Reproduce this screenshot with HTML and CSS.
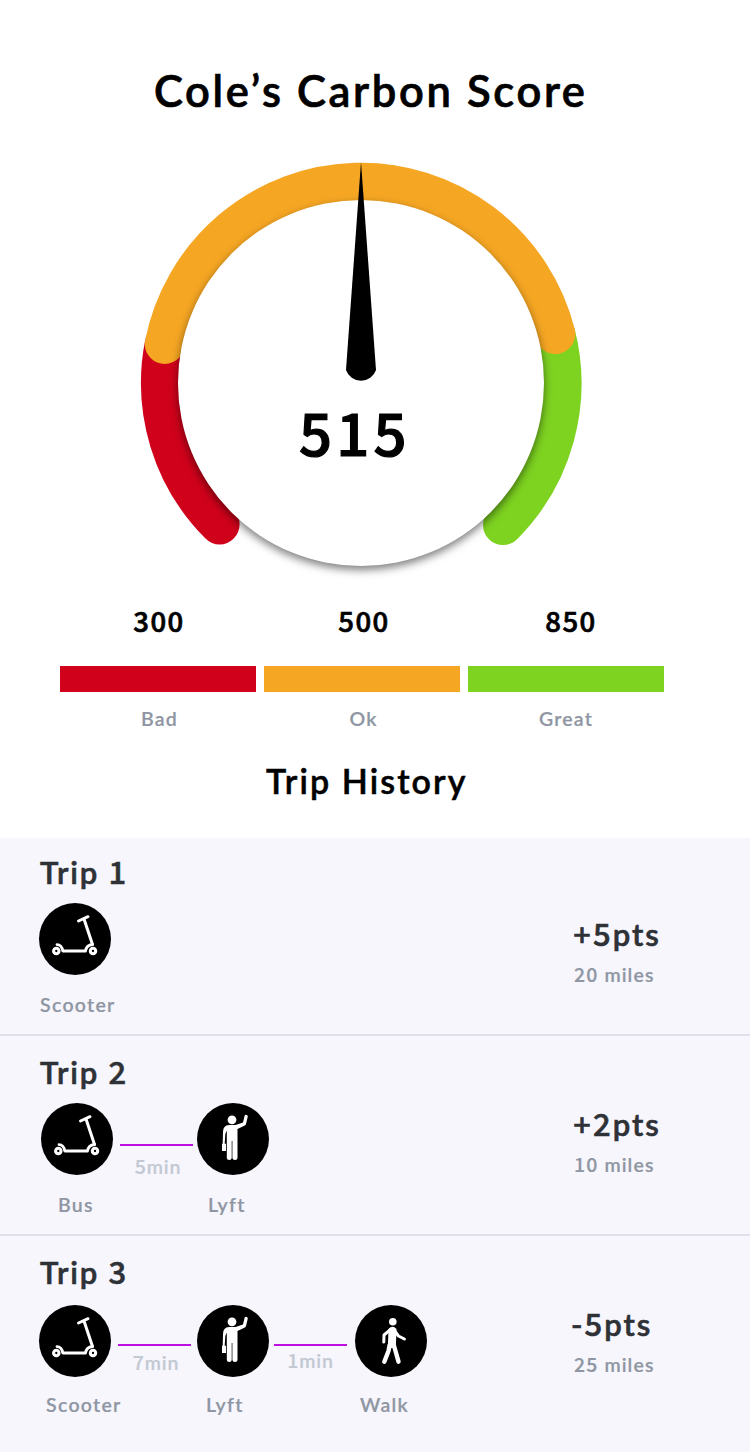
FILE: index.html
```html
<!DOCTYPE html>
<html>
    <head>
        <meta charset="utf-8">
        <title>Carbon Score</title>
        <link rel="stylesheet" href="styles.css">
    </head>
    <body>
        <!-- icons used by the trips -->
        <svg class="icon-defs">
            <symbol id="scooter" viewBox="0 0 72 72">
                <g fill="none" stroke="white" stroke-linecap="round" stroke-linejoin="round">
                    <path d="M39.5 18 L49 13.7" stroke-width="3"/>
                    <path d="M45 16 L53.5 41.5" stroke-width="3"/>
                    <path d="M18 41.6 C22 41.6 23.2 44.5 23.8 48 H46.5 C47 44.5 49 42 53.5 41.5" stroke-width="2.8"/>
                    <circle cx="17.3" cy="48" r="2.7" stroke-width="3.1"/>
                    <circle cx="54" cy="48" r="2.7" stroke-width="3.1"/>
                </g>
            </symbol>
            <symbol id="lyft" viewBox="0 0 72 72">
                <circle cx="35" cy="16.8" r="4.4" fill="white"/>
                <path d="M32 22 H38.5 L46 19.5 L47.6 12.8 Q48.3 11.2 50.2 12.2 Q51 12.8 50.7 14 L49 21 Q48.7 22 47.8 22.5 L40.5 26 V55 Q40.4 57 38 57 Q35.5 57 35.4 55 V38 H34.7 V55 Q34.6 57 32.3 57 Q29.9 57 29.8 55 V27.5 L28.3 31 L27.7 40.7 H29 V48 H25 V40.7 H25.7 L26 29 Q26 22.3 32 22 Z" fill="white"/>
            </symbol>
            <symbol id="walk" viewBox="0 0 72 72">
                <circle cx="37.8" cy="16.8" r="3.8" fill="white"/>
                <g fill="none" stroke="white" stroke-linecap="round" stroke-linejoin="round">
                    <path d="M35 25 L29 30 L28.8 37" stroke-width="3"/>
                    <path d="M39 25 L43.5 31 L49.4 34" stroke-width="3"/>
                    <path d="M34.7 40 L33.5 46 L29.3 56.7" stroke-width="4.4"/>
                    <path d="M38.8 40 L40.5 46 L43.5 56.7" stroke-width="4.4"/>
                </g>
                <path d="M33.5 24 Q37.5 19.5 41.5 24 L40.8 43 H32.8 Z" fill="white"/>
            </symbol>
        </svg>

        <h1 class="title">Cole’s Carbon Score</h1>

        <div class="gauge">
            <svg class="gauge-arc" width="442" height="442" viewBox="140 162 442 442">
                <path class="arc red" d="M219.6 524.4 A200 200 0 0 1 164.8 344"/>
                <path class="arc green" d="M503 525 A200.3 200.3 0 0 0 555.3 334"/>
                <path class="arc orange" d="M164.8 344 A200.2 200.2 0 0 1 555.3 334"/>
            </svg>
            <div class="dial"></div>
            <svg class="needle" width="32" height="220" viewBox="0 0 32 220">
                <path d="M16 0 L31 208 A15.8 15.8 0 0 1 1 208 Z"/>
            </svg>
            <p class="score">515</p>
        </div>

        <div class="scale">
            <div class="range bad">
                <p class="range-value">300</p>
                <div class="range-bar"></div>
                <p class="range-name">Bad</p>
            </div>
            <div class="range ok">
                <p class="range-value">500</p>
                <div class="range-bar"></div>
                <p class="range-name">Ok</p>
            </div>
            <div class="range great">
                <p class="range-value">850</p>
                <div class="range-bar"></div>
                <p class="range-name">Great</p>
            </div>
        </div>

        <h2 class="subtitle">Trip History</h2>

        <div class="trips">
            <div class="trip trip-one">
                <div class="trip-route">
                    <h3 class="trip-name">Trip <span class="num">1</span></h3>
                    <div class="stops">
                        <svg class="stop"><use href="#scooter"/></svg>
                    </div>
                    <div class="labels"><span class="label-first">Scooter</span></div>
                </div>
                <div class="trip-result">
                    <p class="points">+<span class="num">5</span>pts</p>
                    <p class="miles"><span class="num">20</span> miles</p>
                </div>
            </div>

            <div class="trip trip-two">
                <div class="trip-route">
                    <h3 class="trip-name">Trip <span class="num">2</span></h3>
                    <div class="stops">
                        <svg class="stop"><use href="#scooter"/></svg>
                        <div class="link"><span class="num">5</span>min</div>
                        <svg class="stop"><use href="#lyft"/></svg>
                    </div>
                    <div class="labels">
                        <span class="label-first">Bus</span>
                        <span class="label-second">Lyft</span>
                    </div>
                </div>
                <div class="trip-result">
                    <p class="points">+<span class="num">2</span>pts</p>
                    <p class="miles"><span class="num">10</span> miles</p>
                </div>
            </div>

            <div class="trip trip-three">
                <div class="trip-route">
                    <h3 class="trip-name">Trip <span class="num">3</span></h3>
                    <div class="stops">
                        <svg class="stop"><use href="#scooter"/></svg>
                        <div class="link"><span class="num">7</span>min</div>
                        <svg class="stop"><use href="#lyft"/></svg>
                        <div class="link link-short"><span class="num">1</span>min</div>
                        <svg class="stop"><use href="#walk"/></svg>
                    </div>
                    <div class="labels">
                        <span class="label-first">Scooter</span>
                        <span class="label-second">Lyft</span>
                        <span class="label-third">Walk</span>
                    </div>
                </div>
                <div class="trip-result">
                    <p class="points">-<span class="num">5</span>pts</p>
                    <p class="miles"><span class="num">25</span> miles</p>
                </div>
            </div>
        </div>
    </body>
</html>
```
FILE: styles.css
```css
* {
    box-sizing: border-box;
}
body {
    margin: 0;
    width: 750px;
    height: 1452px;
    overflow: hidden;
    background-color: white;
    color: black;
    font-family: Lato, sans-serif;
    font-weight: 600;
    -webkit-text-stroke: 0.2px;
}
p, h1, h2, h3 {
    margin: 0;
    font-weight: 600;
    white-space: nowrap;
}
.num, .score, .range-value {
    font-family: "Noto Sans CJK SC", Lato, sans-serif;
    font-weight: 500;
    line-height: 1;
}
.icon-defs {
    position: absolute;
    width: 0;
    height: 0;
}
.title {
    padding-top: 60px;
    height: 162px;
    padding-left: 154px;
    font-size: 43.5px;
    line-height: 60px;
    letter-spacing: 2.65px;
    -webkit-text-stroke: 0.7px;
}

/* gauge */
.gauge {
    display: grid;
    width: 442px;
    height: 442px;
    margin-left: 140px;
}
.gauge-arc, .dial, .needle, .score {
    grid-area: 1 / 1;
}
.arc {
    fill: none;
    stroke-width: 40px;
    stroke-linecap: round;
}
.red {
    stroke: #d0021b;
}
.orange {
    stroke: #f5a623;
}
.green {
    stroke: #7ed321;
}
.dial {
    width: 366px;
    height: 366px;
    margin: 38px 0 0 38px;
    border-radius: 50%;
    background-color: white;
    box-shadow: 0 4px 8px rgba(0, 0, 0, 0.5);
    z-index: 1;
}
.needle {
    margin: 0 0 0 205px;
    z-index: 2;
}
.score {
    margin: 239px 0 0 159px;
    font-size: 58px;
    line-height: 60px;
    letter-spacing: 4.2px;
    -webkit-text-stroke: 1.2px;
    z-index: 2;
}

/* scale */
.scale {
    display: flex;
    gap: 8px;
    margin-left: 60px;
}
.range {
    width: 196px;
    text-align: center;
}
.range-value {
    height: 62px;
    padding: 1px 0 0 2px;
    font-size: 27.5px;
    line-height: 30px;
    letter-spacing: 1.5px;
    -webkit-text-stroke: 0.7px;
}
.ok .range-value {
    padding-left: 4px;
}
.great .range-value {
    padding-left: 10px;
}
.range-bar {
    height: 26px;
}
.bad .range-bar {
    background-color: #d0021b;
}
.ok .range-bar {
    background-color: #f5a623;
}
.great .range-bar {
    background-color: #7ed321;
}
.range-name {
    height: 66px;
    padding: 12px 0 0 3px;
    color: #8f96a3;
    font-size: 19.5px;
    line-height: 30px;
    letter-spacing: 1.2px;
}
.great .range-name {
    padding-left: 0;
}
.subtitle {
    height: 80px;
    padding-left: 266px;
    font-size: 34px;
    line-height: 46px;
    letter-spacing: 2.1px;
    -webkit-text-stroke: 0.5px;
}

/* trips */
.trips {
    height: 614px;
    background-color: #f7f6fd;
}
.trip {
    display: flex;
    height: 200px;
    border-bottom: 2px solid #dfe0eb;
}
.trip-one {
    height: 198px;
}
.trip-three {
    height: 216px;
    border-bottom: none;
}
.trip-route {
    width: 572px;
    padding: 15px 0 0 39px;
}
.trip-two .trip-route, .trip-three .trip-route {
    padding-top: 17px;
}
.trip-name {
    height: 50px;
    padding-left: 1px;
    color: #2e3136;
    font-size: 31px;
    line-height: 38px;
    letter-spacing: 1.8px;
    -webkit-text-stroke: 0.6px;
}
.stops {
    display: flex;
    height: 72px;
}
.trip-two .stops {
    margin-left: 2px;
}
.trip-three .stops {
    height: 74px;
    padding-top: 2px;
}
.stop {
    width: 72px;
    height: 72px;
    border-radius: 50%;
    background-color: black;
}
.link {
    width: 73px;
    height: 40px;
    margin: 41px 4px 0 7px;
    padding-left: 3px;
    border-top: 2px solid #bd10e0;
    color: #c3c9d3;
    font-size: 19.5px;
    line-height: 42px;
    letter-spacing: 0.8px;
    text-align: center;
}
.trip-three .link {
    margin: 39px 6px 0 7px;
    line-height: 34px;
}
.trip-three .link-short {
    margin: 39px 8px 0 5px;
    padding-left: 0;
    line-height: 30px;
}
.labels {
    display: flex;
    margin-top: 15px;
    color: #8f96a3;
    font-size: 19.5px;
    line-height: 30px;
    letter-spacing: 1.3px;
}
.trip-three .labels {
    margin-top: 13px;
}
.label-first {
    width: 168px;
    padding-left: 1px;
}
.trip-two .label-first {
    width: 169px;
    padding-left: 19px;
}
.trip-three .label-first {
    width: 167px;
    padding-left: 7px;
}
.trip-three .label-second {
    width: 154px;
}
.trip-result {
    padding-top: 77px;
}
.trip-two .trip-result, .trip-three .trip-result {
    padding-top: 69px;
}
.points {
    height: 40px;
    padding-left: 1px;
    color: #2e3136;
    font-size: 31px;
    line-height: 38px;
    letter-spacing: 2px;
    -webkit-text-stroke: 0.6px;
}
.trip-three .points {
    margin-left: -2px;
}
.miles {
    padding-left: 2px;
    color: #8f96a3;
    font-size: 19.5px;
    line-height: 40px;
    letter-spacing: 1.1px;
}
```
